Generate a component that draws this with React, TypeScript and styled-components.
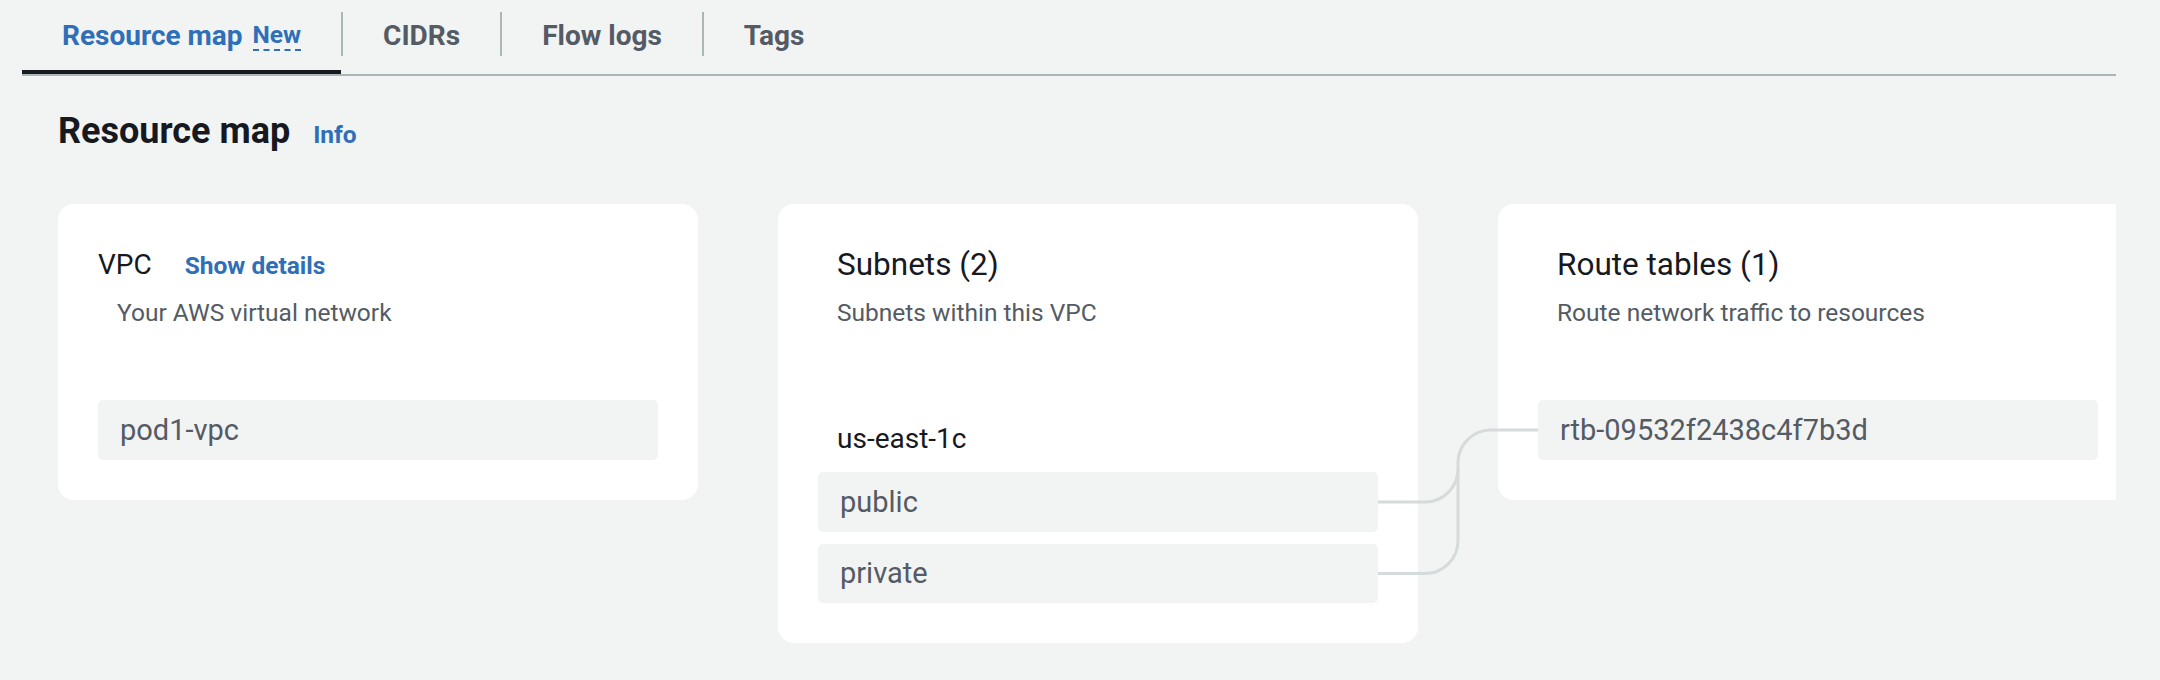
import { Fragment } from 'react';
import styled, { createGlobalStyle } from 'styled-components';

const GlobalStyle = createGlobalStyle`
  html, body {
    margin: 0;
    padding: 0;
    background: #f2f3f3;
  }
  body {
    font-family: Roboto, "Noto Sans", "Liberation Sans", sans-serif;
    color: #16191f;
  }
`;

const LINK = '#2f6fb7';
const MUTED = '#545b64';

const Page = styled.div`
  width: 2160px;
  height: 680px;
  box-sizing: border-box;
  padding: 0 44px 0 22px;
  overflow: hidden;
`;

const TabList = styled.nav`
  display: flex;
  border-bottom: 2px solid #aab7b8;
`;

const Tab = styled.div<{ $active?: boolean }>`
  display: flex;
  align-items: center;
  gap: 10px;
  height: 74px;
  box-sizing: border-box;
  padding: 0 40px;
  border-bottom: 4px solid ${(p) => (p.$active ? '#16191f' : 'transparent')};
  font-size: 28px;
  font-weight: 700;
  line-height: 35px;
  color: ${(p) => (p.$active ? LINK : MUTED)};
`;

const NewBadge = styled.span`
  display: inline-block;
  font-size: 24.5px;
  line-height: 28px;
  border-bottom: 2px dashed ${LINK};
  margin-top: 1px;
`;

const Divider = styled.span`
  width: 2px;
  margin: 12px 0 18px;
  background: #aab7b8;
`;

const Main = styled.main`
  padding-left: 36px;
  overflow: hidden;
`;

const HeadingRow = styled.div`
  display: flex;
  align-items: baseline;
  gap: 23px;
  margin-top: 34px;
`;

const Heading = styled.h2`
  margin: 0;
  font-size: 36px;
  line-height: 42px;
  font-weight: 700;
  color: #16191f;
`;

const InfoLink = styled.a`
  font-size: 24.5px;
  font-weight: 700;
  color: ${LINK};
  text-decoration: none;
`;

const CardRow = styled.div`
  position: relative;
  display: flex;
  align-items: flex-start;
  gap: 80px;
  margin-top: 52px;
`;

const Card = styled.section`
  flex-shrink: 0;
  width: 640px;
  box-sizing: border-box;
  padding: 42px 40px 40px;
  background: #fff;
  border-radius: 16px;
`;

const CardHeader = styled.div<{ $indent?: boolean }>`
  padding-left: ${(p) => (p.$indent ? 19 : 0)}px;
`;

const TitleRow = styled.div`
  display: flex;
  align-items: baseline;
  gap: 33px;
`;

const Title = styled.h3<{ $size: number }>`
  margin: 0;
  font-size: ${(p) => p.$size}px;
  line-height: 38.5px;
  font-weight: 400;
  color: #16191f;
`;

const DetailsLink = styled.a`
  font-size: 24.5px;
  font-weight: 700;
  color: ${LINK};
  text-decoration: none;
`;

const Description = styled.p<{ $indent?: boolean }>`
  margin: 10px 0 0;
  padding-left: ${(p) => (p.$indent ? 19 : 0)}px;
  font-size: 24.5px;
  line-height: 35px;
  color: ${MUTED};
`;

const ResourceList = styled.div<{ $offset: number }>`
  display: flex;
  flex-direction: column;
  gap: 12px;
  margin-top: ${(p) => p.$offset}px;
`;

const ZoneLabel = styled.div`
  padding-left: 19px;
  margin-bottom: 1.5px;
  font-size: 28px;
  line-height: 38.5px;
  color: #16191f;
`;

const Resource = styled.div`
  display: flex;
  align-items: center;
  height: 59.5px;
  padding: 0 22px;
  background: #f2f3f3;
  border-radius: 5px;
  font-size: 29px;
  color: ${MUTED};
`;

const Connectors = styled.svg`
  position: absolute;
  left: 0;
  top: 0;
  pointer-events: none;
  overflow: visible;
`;

const tabs = ['CIDRs', 'Flow logs', 'Tags'];

export default function App() {
  return (
    <>
      <GlobalStyle />
      <Page>
        <TabList>
          <Tab $active>
            Resource map <NewBadge>New</NewBadge>
          </Tab>
          {tabs.map((t) => (
            <Fragment key={t}>
              <Divider />
              <Tab>{t}</Tab>
            </Fragment>
          ))}
        </TabList>

        <Main>
          <HeadingRow>
            <Heading>Resource map</Heading>
            <InfoLink>Info</InfoLink>
          </HeadingRow>

          <CardRow>
            <Card>
              <CardHeader>
                <TitleRow>
                  <Title $size={28}>VPC</Title>
                  <DetailsLink>Show details</DetailsLink>
                </TitleRow>
                <Description $indent>Your AWS virtual network</Description>
              </CardHeader>
              <ResourceList $offset={70.5}>
                <Resource>pod1-vpc</Resource>
              </ResourceList>
            </Card>

            <Card>
              <CardHeader $indent>
                <Title $size={31.5}>Subnets (2)</Title>
                <Description>Subnets within this VPC</Description>
              </CardHeader>
              <ResourceList $offset={90.5}>
                <ZoneLabel>us-east-1c</ZoneLabel>
                <Resource>public</Resource>
                <Resource>private</Resource>
              </ResourceList>
            </Card>

            <Card>
              <CardHeader $indent>
                <Title $size={31.5}>Route tables (1)</Title>
                <Description>Route network traffic to resources</Description>
              </CardHeader>
              <ResourceList $offset={70.5}>
                <Resource>rtb-09532f2438c4f7b3d</Resource>
              </ResourceList>
            </Card>

            <Connectors width="2100" height="450" fill="none" stroke="#d5dbdb" strokeWidth="3">
              <path d="M1320 298 H1367 A33 33 0 0 0 1400 265 V259 A33 33 0 0 1 1433 226 H1480" />
              <path d="M1320 369.5 H1367 A33 33 0 0 0 1400 336.5 V265" />
            </Connectors>
          </CardRow>
        </Main>
      </Page>
    </>
  );
}
